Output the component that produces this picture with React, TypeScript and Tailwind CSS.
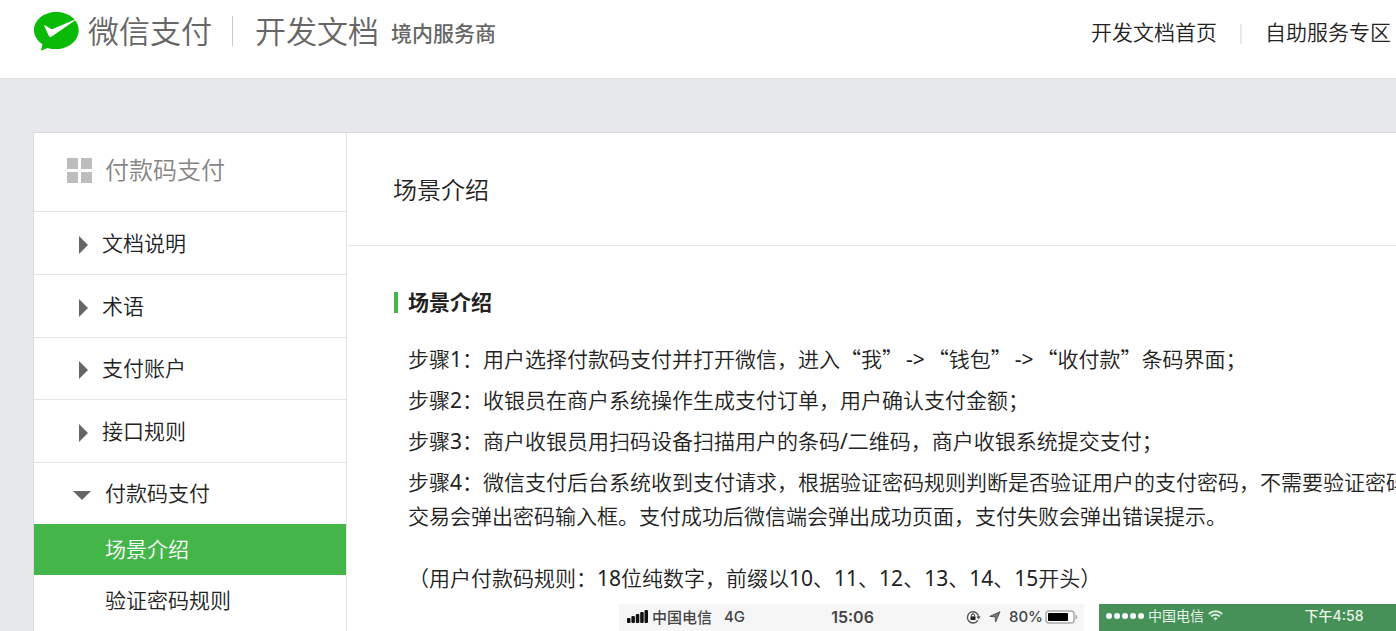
import type { ReactNode } from 'react';

function WeChatPayMark() {
  return (
    <svg width="45" height="40" viewBox="0 0 45 40" aria-hidden="true">
      <path
        d="M22.3 0C10 0 0 8 0 18.3c0 5.400 2.900 10.200 8.400 13.900L7 38.800l6.400-2.900c2.700.8 5.700 1.200 8.900 1.200 12.400 0 22.400-8.400 22.400-18.800S34.700 0 22.300 0z"
        fill="#09bb07"
      />
      <path
        d="M41.300 8.200 17.400 24.700c-1.200.6-1.900.3-2.500-.7L10.300 14.100c-.3-.9.500-1 1.100-.6l5.300 3.300c.7.4 1.300.4 2 .1L39.800 7.900z"
        fill="#fff"
      />
    </svg>
  );
}

function GridIcon() {
  return (
    <svg width="25" height="25" viewBox="0 0 25 25" fill="#bdbdbd" aria-hidden="true">
      <rect x="0" y="0" width="11" height="11" />
      <rect x="14" y="0" width="11" height="11" />
      <rect x="0" y="14" width="11" height="11" />
      <rect x="14" y="14" width="11" height="11" />
    </svg>
  );
}

function Caret({ open }: { open?: boolean }) {
  return open ? (
    <svg width="18" height="9" viewBox="0 0 18 9" aria-hidden="true">
      <path d="M0 0h18L9 9z" fill="#666" />
    </svg>
  ) : (
    <svg width="9" height="18" viewBox="0 0 9 18" aria-hidden="true">
      <path d="M0 0v18l9-9z" fill="#666" />
    </svg>
  );
}

// Full-width curly quotes come from the CJK face.
function Quoted({ children }: { children: ReactNode }) {
  return <span className="font-['Noto_Sans_CJK_SC',sans-serif]">“{children}”</span>;
}

// Latin glyphs take the regular weight beside the lighter CJK text.
function Latin({ children }: { children: ReactNode }) {
  return <span className="font-normal">{children}</span>;
}

function Arrow() {
  return <span className="mx-[3px] font-normal">-&gt;</span>;
}

const sections = [
  { label: '文档说明' },
  { label: '术语' },
  { label: '支付账户' },
  { label: '接口规则' },
  { label: '付款码支付', open: true },
];

function Sidebar() {
  return (
    <aside className="w-[313px] shrink-0 border-r border-[#e4e5e9]">
      <h2 className="flex h-[79px] items-center gap-[13px] border-b border-[#e4e5e9] pb-1 pl-[33px] text-2xl text-[#868686]">
        <GridIcon />
        付款码支付
      </h2>
      <nav aria-label="付款码支付">
        <ul className="grid h-[312px] grid-rows-5">
          {sections.map((s) => (
            <li key={s.label} className="flex border-t border-[#e4e5e9] first:border-t-0">
              <button
                type="button"
                aria-expanded={!!s.open}
                className={
                  s.open
                    ? 'flex w-full cursor-pointer items-center gap-[14px] pl-[39px] text-left'
                    : 'flex w-full cursor-pointer items-center gap-[14px] pl-[45px] text-left'
                }
              >
                <span className="pt-1">
                  <Caret open={s.open} />
                </span>
                {s.label}
              </button>
            </li>
          ))}
        </ul>
        <ul>
          <li>
            <a href="#scene" aria-current="page" className="block bg-[#44b549] pl-[71px] leading-[51px] text-white">
              场景介绍
            </a>
          </li>
          <li>
            <a href="#password" className="block pl-[71px] leading-[51px]">
              验证密码规则
            </a>
          </li>
        </ul>
      </nav>
    </aside>
  );
}

function LightStatusBar() {
  return (
    <div className="grid h-[27px] w-[465px] shrink-0 grid-cols-[1fr_auto_1fr] items-center bg-[#f6f6f6] pr-[6px] pb-[2px] pl-2 font-medium text-[#444]">
      <div className="flex items-center gap-1 text-[15px]">
        <svg width="21" height="14" viewBox="0 0 21 14" fill="#111" aria-hidden="true">
          <rect x="0" y="8" width="3.500" height="5" rx="1" />
          <rect x="4.400" y="6" width="3.500" height="7" rx="1" />
          <rect x="8.800" y="4" width="3.500" height="9" rx="1" />
          <rect x="13.200" y="2" width="3.500" height="11" rx="1" />
          <rect x="17.500" y="0" width="3.500" height="13" rx="1" />
        </svg>
        <span>中国电信</span>
        <span className="ml-2 font-['Inter']">4G</span>
      </div>
      <span className="font-['Inter'] text-base font-semibold">15:06</span>
      <div className="flex items-center justify-end gap-[6px] font-['Inter'] text-[15px]">
        <svg width="15" height="14" viewBox="0 0 15 14" fill="none" aria-hidden="true">
          <path d="M11.800 10.300A5.600 5.600 0 1 1 12.600 7" stroke="#555" strokeWidth="1.400" />
          <path d="M10.400 6.500h4.400l-2.200 2.800z" fill="#555" />
          <rect x="4.500" y="6.400" width="5" height="3.600" fill="#222" />
          <path d="M5.500 6.500V5.300a1.500 1.500 0 0 1 3 0v1.200" stroke="#222" />
        </svg>
        <svg width="16" height="12" viewBox="0 0 16 12" aria-hidden="true">
          <path d="M13 .8 8.600 11 8.200 5.800 2.800 5.400z" fill="#777" stroke="#555" strokeLinejoin="round" />
        </svg>
        <span>80%</span>
        <svg width="33" height="14" viewBox="0 0 33 14" className="-ml-1" aria-hidden="true">
          <rect x="1" y="1" width="28" height="12" rx="3" fill="#fff" stroke="#aaa" strokeWidth="1.500" />
          <rect x="3" y="3" width="20" height="8" rx="1" fill="#000" />
          <path d="M30.500 4.500c2.500.8 2.500 4.200 0 5z" fill="#aaa" />
        </svg>
      </div>
    </div>
  );
}

function GreenStatusBar() {
  return (
    <div className="grid h-[27px] w-[470px] shrink-0 grid-cols-[1fr_auto_1fr] items-center bg-[#469157] px-[7px] pb-1 text-sm text-[#eaf5ec]">
      <div className="flex items-center gap-1">
        <svg width="38" height="8" viewBox="0 0 38 8" fill="#fff" aria-hidden="true">
          <circle cx="3" cy="4" r="3" />
          <circle cx="11" cy="4" r="3" />
          <circle cx="19" cy="4" r="3" />
          <circle cx="27" cy="4" r="3" />
          <circle cx="35" cy="4" r="3" />
        </svg>
        <span className="font-normal">中国电信</span>
        <svg width="15" height="11" viewBox="0 0 15 11" fill="none" stroke="#d7ecdb" strokeWidth="1.900" aria-hidden="true">
          <path d="M.8 4a9.500 9.500 0 0 1 13.400 0" />
          <path d="M3.200 6.500a6.100 6.100 0 0 1 8.600 0" />
          <path d="M5.400 8.300a3 3 0 0 1 4.200 0L7.500 10.600z" fill="#d7ecdb" stroke="none" />
        </svg>
      </div>
      <span className="font-['Inter','Noto_Sans_CJK_SC',sans-serif] text-sm font-medium">下午4:58</span>
      <span />
    </div>
  );
}

export default function App() {
  return (
    <div
      lang="zh-CN"
      className="flex min-h-screen flex-col overflow-hidden bg-[#e7e8eb] font-['Noto_Sans','Noto_Sans_CJK_SC',sans-serif] text-[21px] leading-[34px] font-[350] text-[#222]"
    >
      <header className="flex h-[79px] items-start justify-between border-b border-[#d9dadc] bg-white pr-[5px] pl-[34px] whitespace-nowrap">
        <a href="#home" className="flex h-[62px] items-center text-[#666]">
          <span className="pt-[2px]">
            <WeChatPayMark />
          </span>
          <span className="ml-[9px] text-[31px]">微信支付</span>
          <span className="mr-[22px] ml-5 h-[30px] w-px bg-[#c8c8c8]" />
          <span className="text-[31px]">开发文档</span>
          <span className="ml-3 pt-1 font-medium">境内服务商</span>
        </a>
        <nav className="flex h-16 items-center gap-[23px]">
          <a href="#docs">开发文档首页</a>
          <span className="mt-1 h-5 w-[2px] bg-[#e7e8eb]" />
          <a href="#service">自助服务专区</a>
        </nav>
      </header>

      <div className="mt-[53px] ml-[33px] flex grow border-t border-l border-[#d9dadc] bg-white">
        <Sidebar />
        <main className="min-w-0 grow overflow-hidden pl-px">
          <h1 className="flex h-[113px] items-center border-b border-[#e7e7eb] pt-px pl-[45px] text-2xl">场景介绍</h1>
          <article className="pt-[39px] pl-[46px]">
            <h2 className="flex items-center gap-[10px] font-bold">
              <span className="h-[21px] w-1 bg-[#44b549]" />
              场景介绍
            </h2>
            <div className="mt-[22px] space-y-[7px] pl-[14px] whitespace-nowrap">
              <p>
                步骤<Latin>1</Latin>：用户选择付款码支付并打开微信，进入<Quoted>我</Quoted>
                <Arrow />
                <Quoted>钱包</Quoted>
                <Arrow />
                <Quoted>收付款</Quoted>条码界面；
              </p>
              <p>
                步骤<Latin>2</Latin>：收银员在商户系统操作生成支付订单，用户确认支付金额；
              </p>
              <p>
                步骤<Latin>3</Latin>：商户收银员用扫码设备扫描用户的条码<Latin>/</Latin>二维码，商户收银系统提交支付；
              </p>
              <p>
                步骤<Latin>4</Latin>：微信支付后台系统收到支付请求，根据验证密码规则判断是否验证用户的支付密码，不需要验证密码
                <br />
                交易会弹出密码输入框。支付成功后微信端会弹出成功页面，支付失败会弹出错误提示。
              </p>
            </div>
            <p className="mt-7 pl-[14px] whitespace-nowrap">
              （用户付款码规则：<Latin>18</Latin>位纯数字，前缀以<Latin>10</Latin>、<Latin>11</Latin>、<Latin>12</Latin>、
              <Latin>13</Latin>、<Latin>14</Latin>、<Latin>15</Latin>开头）
            </p>
            <div className="mt-[9px] flex gap-[15px] pl-[225px] leading-[22px]">
              <LightStatusBar />
              <GreenStatusBar />
            </div>
          </article>
        </main>
      </div>
    </div>
  );
}
